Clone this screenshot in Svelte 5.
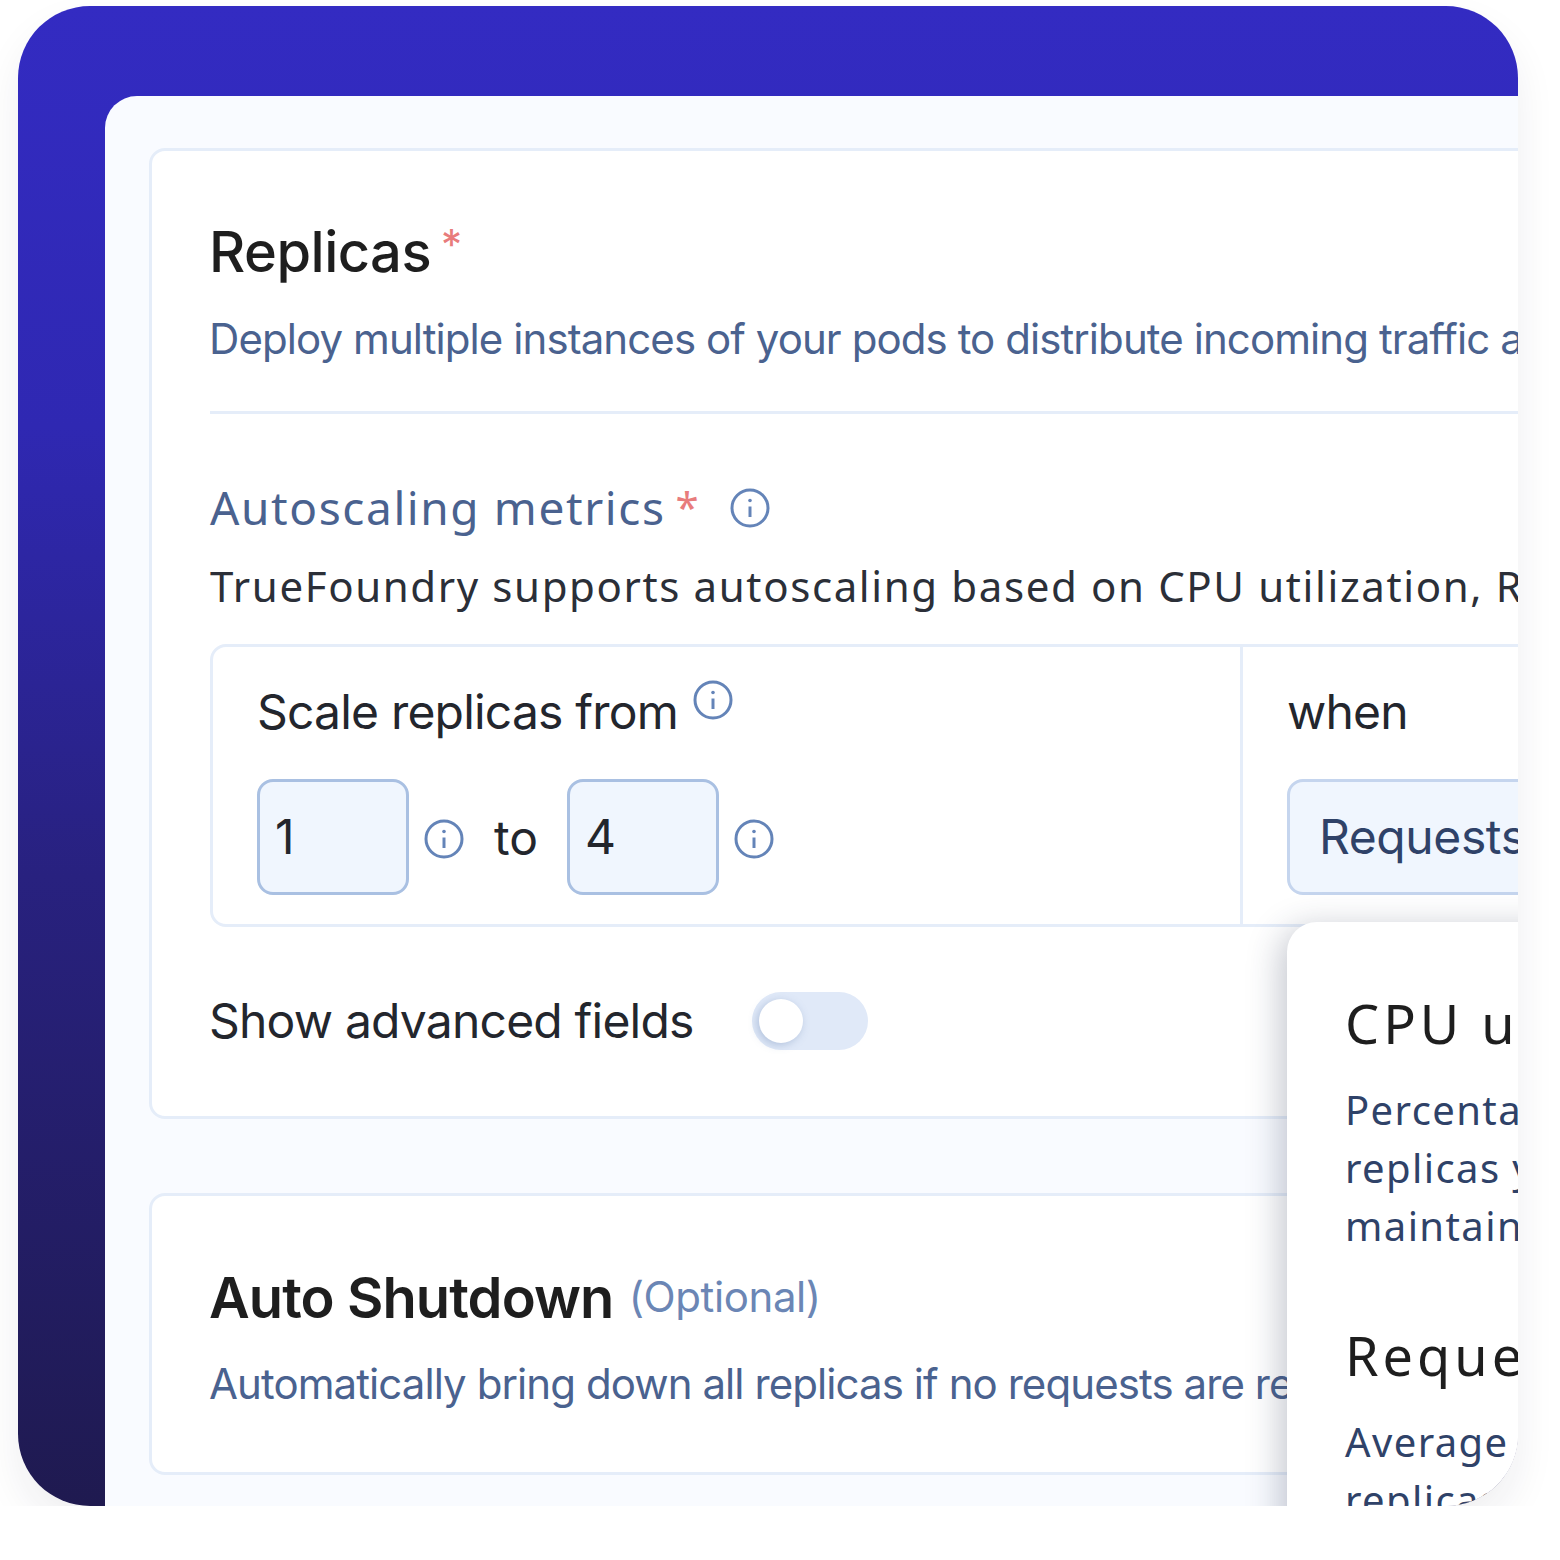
<script>
  const metrics = [
    { title: "CPU utilization", lines: ["Percentage of CPU used by the", "replicas your service should", "maintain on average"] },
    { title: "Requests per second", lines: ["Average number of requests the", "replicas should handle"] }
  ];
</script>

<div class="frame">
  <div class="panel">
    <section class="card first">
      <h2 class="title">Replicas<span class="star">*</span></h2>
      <p class="desc">Deploy multiple instances of your pods to distribute incoming traffic across them</p>
      <hr class="rule" />

      <div class="label">
        <span>Autoscaling metrics</span><span class="star small">*</span>
        {@render info()}
      </div>
      <p class="help">TrueFoundry supports autoscaling based on CPU utilization, Requests per second and more</p>

      <div class="scale">
        <div class="from">
          <div class="row-title">Scale replicas from <span class="raised">{@render info()}</span></div>
          <div class="inputs">
            <div class="num">1</div>
            {@render info()}
            <span class="to">to</span>
            <div class="num">4</div>
            {@render info()}
          </div>
        </div>
        <div class="when">
          <div class="row-title">when</div>
          <div class="select">Requests per second</div>
        </div>
      </div>

      <div class="advanced">
        <span>Show advanced fields</span>
        <div class="toggle"><div class="knob"></div></div>
      </div>
    </section>

    <section class="card second">
      <h2 class="title">Auto Shutdown <span class="optional">(Optional)</span></h2>
      <p class="desc">Automatically bring down all replicas if no requests are received for a period of time</p>
    </section>
  </div>

  <div class="popover">
    {#each metrics as m}
      <div class="metric">
        <h3>{m.title}</h3>
        {#each m.lines as line}
          <p>{line}</p>
        {/each}
      </div>
    {/each}
  </div>
</div>

{#snippet info()}
  <svg class="info" viewBox="0 0 40 40" width="40" height="40" fill="none" stroke="#6484b8">
    <circle cx="20" cy="20" r="18" stroke-width="3" />
    <path d="M20 18.5V29" stroke-width="3" />
    <circle cx="20" cy="12.5" r="1.8" fill="#6484b8" stroke="none" />
  </svg>
{/snippet}

<style>
  :global(body) {
    margin: 0;
    background: #fff;
  }

  .frame {
    position: relative;
    box-sizing: border-box;
    width: 1500px;
    height: 1500px;
    margin: 6px 0 0 18px;
    padding: 90px 0 0 87px;
    overflow: hidden;
    border-radius: 72px;
    background: linear-gradient(180deg, #332bc2 0%, #2f28b2 28%, #28217f 58%, #1f1a50 100%);
    box-shadow: 0 20px 40px rgba(30, 30, 50, 0.07);
    font-family: Inter, sans-serif;
  }

  .panel {
    box-sizing: border-box;
    width: 1500px;
    height: 1410px;
    padding: 52px 0 0 45px;
    background: #f9fbff;
    border-radius: 32px 0 0 0;
  }

  .card {
    box-sizing: border-box;
    width: 1440px;
    margin-left: -1px;
    padding-left: 57px;
    background: #fff;
    border: 3px solid #e5edf9;
    border-radius: 16px;
  }

  .first {
    height: 971px;
    padding-top: 69px;
  }

  .second {
    height: 282px;
    margin-top: 74px;
    padding-top: 69px;
  }

  .title {
    margin: 0;
    font-size: 56px;
    line-height: 64px;
    font-weight: 500;
    letter-spacing: -0.5px;
    color: #1e1e1e;
  }

  .second .title {
    font-weight: 600;
    letter-spacing: -0.9px;
  }

  .optional {
    margin-left: 2px;
    font-size: 42px;
    font-weight: 400;
    letter-spacing: -0.4px;
    color: #6b86b5;
    vertical-align: 6px;
  }

  .star {
    display: inline-block;
    margin-left: 10px;
    font-size: 42px;
    font-weight: 400;
    color: #e87c7c;
    vertical-align: 12px;
    line-height: 1;
  }

  .star.small {
    margin-left: 10px;
    vertical-align: 6px;
  }

  .desc {
    margin: 30px 0 0;
    font-size: 42px;
    line-height: 50px;
    white-space: nowrap;
    letter-spacing: -0.92px;
    color: #4a628f;
  }

  .second .desc {
    margin-top: 29px;
  }

  .rule {
    width: 1400px;
    height: 3px;
    margin: 47px 0 0 1px;
    border: 0;
    background: #e5edf9;
  }

  .label {
    display: flex;
    align-items: center;
    height: 50px;
    margin-top: 68px;
    padding-left: 1px;
    font-family: "Noto Sans", sans-serif;
    font-size: 46px;
    letter-spacing: 1.6px;
    color: #4a628f;
    white-space: nowrap;
  }

  .label .info {
    margin: 2px 0 0 30px;
  }

  .help {
    margin: 29px 0 0 1px;
    font-family: "Noto Sans", sans-serif;
    font-size: 42px;
    line-height: 50px;
    letter-spacing: 1.62px;
    color: #2b2f38;
    white-space: nowrap;
  }

  .scale {
    display: flex;
    box-sizing: border-box;
    width: 1400px;
    height: 283px;
    margin: 33px 0 0 1px;
    border: 3px solid #e5edf9;
    border-radius: 16px;
  }

  .from {
    flex: none;
    box-sizing: border-box;
    width: 1030px;
    padding: 36px 0 0 44px;
    border-right: 3px solid #e5edf9;
  }

  .when {
    flex: none;
    padding: 36px 0 0 44px;
  }

  .row-title {
    display: flex;
    align-items: center;
    height: 56px;
    font-size: 48px;
    letter-spacing: -0.8px;
    color: #23262d;
    white-space: nowrap;
  }

  .raised {
    display: flex;
    margin: -22px 0 0 15px;
  }

  .inputs {
    display: flex;
    align-items: center;
    margin-top: 40px;
  }

  .inputs .info {
    margin: 4px 0 0 15px;
  }

  .num {
    box-sizing: border-box;
    width: 152px;
    height: 116px;
    padding-left: 15px;
    border: 3px solid #a9c0e2;
    border-radius: 16px;
    background: #f0f6fe;
    font-size: 48px;
    line-height: 110px;
    color: #23262d;
  }

  .to {
    width: 103px;
    padding-left: 30px;
    box-sizing: border-box;
    font-size: 48px;
    color: #23262d;
  }

  .select {
    box-sizing: border-box;
    width: 560px;
    height: 116px;
    margin-top: 40px;
    padding-left: 29px;
    border: 3px solid #c5d5ee;
    border-radius: 16px;
    background: #f0f6fe;
    font-size: 48px;
    line-height: 110px;
    letter-spacing: -0.4px;
    color: #2f4268;
    white-space: nowrap;
  }

  .advanced {
    display: flex;
    align-items: center;
    gap: 58px;
    margin-top: 64px;
    font-size: 48px;
    letter-spacing: -0.8px;
    color: #23262d;
  }

  .toggle {
    box-sizing: border-box;
    width: 116px;
    height: 58px;
    padding: 7px;
    border-radius: 29px;
    background: #e0e9f8;
  }

  .knob {
    width: 44px;
    height: 44px;
    border-radius: 50%;
    background: #fff;
    box-shadow: -2px 2px 8px rgba(90, 120, 170, 0.35);
  }

  .popover {
    position: absolute;
    left: 1269px;
    top: 916px;
    box-sizing: border-box;
    width: 640px;
    height: 800px;
    padding: 71px 0 0 58px;
    border-radius: 30px;
    background: #fff;
    box-shadow: -6px 6px 34px rgba(40, 50, 80, 0.28);
    white-space: nowrap;
  }

  .metric {
    margin-bottom: 70px;
  }

  .metric h3 {
    margin: 0 0 28px;
    font-family: "Noto Sans", sans-serif;
    font-size: 54px;
    line-height: 60px;
    font-weight: 400;
    letter-spacing: 4px;
    color: #1e1e1e;
  }

  .metric p {
    margin: 0;
    font-family: "Noto Sans", sans-serif;
    font-size: 40px;
    line-height: 58px;
    letter-spacing: 1.4px;
    color: #2f4268;
  }
</style>
